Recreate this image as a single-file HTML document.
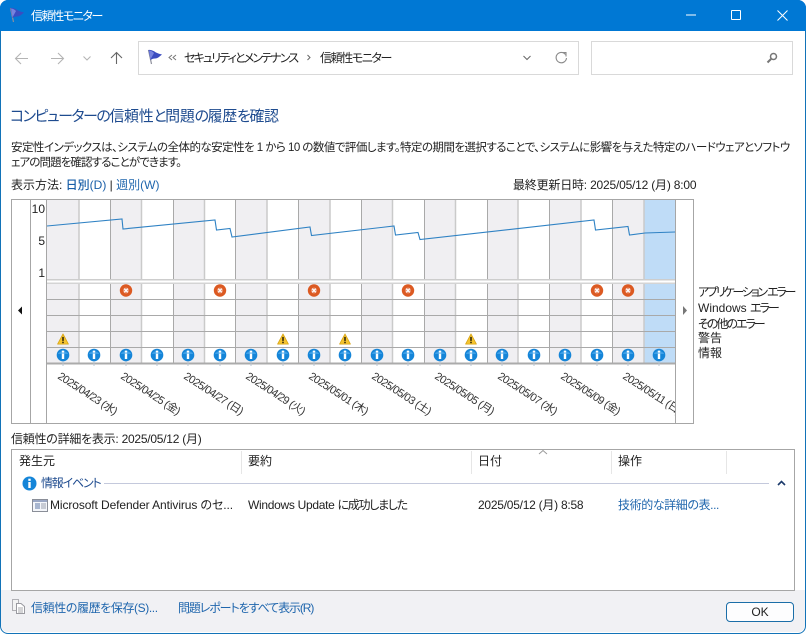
<!DOCTYPE html>
<html lang="ja"><head><meta charset="utf-8"><title>信頼性モニター</title>
<style>
html,body{margin:0;padding:0;background:#fff;width:806px;height:634px;overflow:hidden}
body{font-family:"Liberation Sans","Noto Sans CJK JP",sans-serif;font-size:12px;color:#222;font-feature-settings:"palt"}
#w{position:absolute;left:0;top:0;width:804px;height:632px;border:1px solid #1273b8;border-radius:8px;overflow:hidden;background:#fff}
#page{position:absolute;left:0;top:0;width:806px;height:634px}
.t{position:absolute;white-space:nowrap;line-height:16px;height:16px}
.l{color:#1f66ad}
svg{position:absolute;left:0;top:0}
svg text{font-family:"Liberation Sans","Noto Sans CJK JP",sans-serif;font-feature-settings:"palt"}
</style></head><body>
<div id="w"></div>
<div id="page">
<div style="position:absolute;left:0;top:0;width:806px;height:31px;background:#0078d4;border-radius:8px 8px 0 0"></div>
<div style="position:absolute;left:1px;top:590px;width:804px;height:42px;background:#f1f1f4;border-radius:0 0 7px 7px"></div>
<div class="t" style="left:31px;top:8px;color:#fff;font-size:12px;letter-spacing:-1.400px">信頼性モニター</div>

<svg width="806" height="634" viewBox="0 0 806 634">
<defs>
<symbol id="flag" viewBox="0 0 16 16" overflow="visible">
<path d="M1.5 1L4.5 15" stroke="#8d8f9c" stroke-width="1.2" fill="none"/>
<path d="M1.5 1C5 .5 8 3 9 3.5C11 4.5 13 5 15 5.5C13 7 11 9.5 8 9.5C6 9.5 5 10 3.6 11Z" fill="#3b4cc0"/>
<path d="M2 1.5C4 1.5 6 3 7 4L4 9.5L3.4 10Z" fill="#7683df"/>
</symbol>
<g id="inf"><path d="M0 6V11" stroke="#b9c4d0" stroke-width="1"/><circle r="6.300" fill="#1585d8"/><path d="M-5.300 -1A6.300 6.300 0 0 1 5.300 -1Z" fill="#3ea0e8"/><rect x="-1.2" y="-1.5" width="2.4" height="5.500" fill="#fff"/><rect x="-1.2" y="-4.4" width="2.4" height="2" fill="#fff"/></g>
<g id="err"><circle r="6.200" fill="#dc5a22"/><circle r="3" fill="#e98f6c"/><path d="M-1.800 -1.800L1.800 1.800M1.800 -1.800L-1.800 1.800" stroke="#fff" stroke-width="1.300"/></g>
<g id="wrn"><path d="M0 -5.6L5.4 4.6H-5.4Z" fill="#f4c430" stroke="#d9a514" stroke-width=".8" stroke-linejoin="round"/><rect x="-.9" y="-2.6" width="1.8" height="4" fill="#4a3a10"/><rect x="-.9" y="2.2" width="1.8" height="1.5" fill="#4a3a10"/></g>
<clipPath id="c"><rect x="47" y="364" width="628" height="59"/></clipPath>
</defs>

<!-- title flag and window buttons -->
<use href="#flag" x="9" y="7" width="16" height="16"/>
<path d="M686 15H696" stroke="#fff" stroke-width="1"/>
<rect x="731.5" y="10.5" width="9" height="9" fill="none" stroke="#fff" stroke-width="1" rx=".5"/>
<path d="M777.5 10.5L787.5 20.5M787.5 10.5L777.5 20.5" stroke="#fff" stroke-width="1"/>

<!-- nav -->
<g fill="none" stroke="#b4b4b4" stroke-width="1.1">
<path d="M28 58.500H16M21 53L15.500 58.500L21 64"/>
<path d="M51 58.500H63M58 53L63.500 58.500L58 64"/>
<path d="M83.500 56.500L87 60L90.500 56.500"/>
</g>
<path d="M116.500 64V52.500M111 58L116.500 52.500L122 58" fill="none" stroke="#666" stroke-width="1.1"/>
<rect x="138.500" y="41.500" width="440" height="33" fill="#fff" stroke="#d9d9d9"/>
<rect x="591.500" y="41.500" width="201" height="33" fill="#fff" stroke="#d9d9d9"/>
<use href="#flag" x="147" y="49" width="16" height="16"/>
<path d="M172 55L169 57.500L172 60M176 55L173 57.500L176 60" fill="none" stroke="#777" stroke-width="1"/>
<path d="M307.500 55L310 57.500L307.500 60" fill="none" stroke="#666" stroke-width="1"/>
<path d="M523.500 56L527 59.500L530.500 56" fill="none" stroke="#666" stroke-width="1"/>
<path d="M565.500 54.500A5.200 5.200 0 1 0 566.500 58" fill="none" stroke="#8a8a8a" stroke-width="1.1"/><path d="M562 52.500H566V56.500" fill="none" stroke="#8a8a8a" stroke-width="1.1"/>
<circle cx="773.500" cy="56.500" r="3" fill="none" stroke="#777" stroke-width="1.500"/><path d="M771 59L767.500 62.500" stroke="#777" stroke-width="2"/>

<!-- chart -->
<rect x="11.500" y="199.500" width="682" height="224" fill="#fff" stroke="#a6a6a6"/>
<g fill="#f0eff2">
<rect x="47" y="200" width="32" height="163"/><rect x="110" y="200" width="31" height="163"/><rect x="173" y="200" width="31" height="163"/><rect x="235" y="200" width="32" height="163"/><rect x="298" y="200" width="32" height="163"/><rect x="361" y="200" width="31" height="163"/><rect x="424" y="200" width="31" height="163"/><rect x="487" y="200" width="31" height="163"/><rect x="550" y="200" width="31" height="163"/><rect x="612" y="200" width="32" height="163"/>
</g>
<rect x="644" y="200" width="31" height="163" fill="#bfdcf7"/>
<g stroke="#cacaca" stroke-width="1.500">
<path d="M79 200V363M141.500 200V363M204.500 200V363M267 200V363M330 200V363M392.500 200V363M455.500 200V363M518 200V363M581 200V363M644 200V363"/>
</g>
<g stroke="#a9a9a9" stroke-width="1">
<path d="M110.500 200V363M173.500 200V363M235.500 200V363M298.500 200V363M361.500 200V363M424.500 200V363M487.500 200V363M549.500 200V363M612.500 200V363"/>
<path d="M47 299.500H675M47 315.500H675M47 331.500H675M47 347.500H675"/>
</g>
<rect x="47" y="280" width="628" height="3.500" fill="#fff"/>
<rect x="47" y="279" width="628" height="1.500" fill="#cdcdcd"/>
<rect x="47" y="282.500" width="628" height="1.500" fill="#d4d4d4"/>
<rect x="47" y="362.500" width="628" height="2" fill="#ababab"/>
<path d="M30.500 200V423M46.500 200V423M675.500 200V423" stroke="#a6a6a6" fill="none"/>
<polyline points="47,226 122,219 123,229 215,220 216.500,230 230,228.500 232,237 310,227 311.500,235.500 394,226 395.500,235 418,232.500 420,239.500 594,220 595.500,230 628,226.500 629.500,235 645,233 675,232" fill="none" stroke="#2f82c4" stroke-width="1.100"/>
<g fill="#222" font-size="12" text-anchor="end"><text x="45" y="213">10</text><text x="45" y="245">5</text><text x="45" y="277">1</text></g>
<path d="M18 310.500L22 306.500V314.500Z" fill="#111"/>
<path d="M683 306L687 310.500L683 315Z" fill="#777"/>
<use href="#err" x="126" y="290.500"/><use href="#err" x="220" y="290.500"/><use href="#err" x="314" y="290.500"/><use href="#err" x="408" y="290.500"/><use href="#err" x="597" y="290.500"/><use href="#err" x="628" y="290.500"/>
<use href="#wrn" x="63" y="339.500"/><use href="#wrn" x="283" y="339.500"/><use href="#wrn" x="345" y="339.500"/><use href="#wrn" x="471" y="339.500"/>
<use href="#inf" x="63" y="355"/><use href="#inf" x="94" y="355"/><use href="#inf" x="126" y="355"/><use href="#inf" x="157" y="355"/><use href="#inf" x="188" y="355"/><use href="#inf" x="220" y="355"/><use href="#inf" x="251" y="355"/><use href="#inf" x="283" y="355"/><use href="#inf" x="314" y="355"/><use href="#inf" x="345" y="355"/><use href="#inf" x="377" y="355"/><use href="#inf" x="408" y="355"/><use href="#inf" x="440" y="355"/><use href="#inf" x="471" y="355"/><use href="#inf" x="502" y="355"/><use href="#inf" x="534" y="355"/><use href="#inf" x="565" y="355"/><use href="#inf" x="597" y="355"/><use href="#inf" x="628" y="355"/><use href="#inf" x="659" y="355"/>
<g clip-path="url(#c)" font-size="11" fill="#333" letter-spacing="-.6">
<text transform="translate(57,378) rotate(33)">2025/04/23 (水)</text>
<text transform="translate(120,378) rotate(33)">2025/04/25 (金)</text>
<text transform="translate(183,378) rotate(33)">2025/04/27 (日)</text>
<text transform="translate(245,378) rotate(33)">2025/04/29 (火)</text>
<text transform="translate(308,378) rotate(33)">2025/05/01 (木)</text>
<text transform="translate(371,378) rotate(33)">2025/05/03 (土)</text>
<text transform="translate(434,378) rotate(33)">2025/05/05 (月)</text>
<text transform="translate(497,378) rotate(33)">2025/05/07 (水)</text>
<text transform="translate(560,378) rotate(33)">2025/05/09 (金)</text>
<text transform="translate(622,378) rotate(33)">2025/05/11 (日)</text>
</g>

<!-- list -->
<rect x="11.500" y="449.500" width="783" height="141" fill="#fff" stroke="#a6a6a6"/>
<path d="M241.500 451V474M471.500 451V474M611.500 451V474M726.500 451V474" stroke="#e6e6e6"/>
<path d="M539 454L543 450.500L547 454" fill="none" stroke="#9a9a9a" stroke-width="1"/>
<g transform="translate(29.500,483.500)"><circle r="7" fill="#1585d8"/><rect x="-1.200" y="-1.500" width="2.400" height="6" fill="#fff"/><rect x="-1.200" y="-4.800" width="2.400" height="2.200" fill="#fff"/></g>
<path d="M104 483.500H769" stroke="#c4c9dc"/>
<path d="M778 485L781.500 481.500L785 485" fill="none" stroke="#1b3a6b" stroke-width="1.600"/>
<rect x="32.500" y="499.500" width="15" height="12" fill="#f4f6fa" stroke="#8a8e98"/><rect x="33" y="500" width="14" height="2" fill="#9aa7c4"/><rect x="35" y="503" width="5" height="6" fill="#a8b6d0"/><path d="M41 504H46M41 506H46M41 508H46" stroke="#9aa0ad"/>

<!-- footer -->
<path d="M12.500 599.500H18.500V610.500H12.500Z" fill="#f3f3f3" stroke="#b0b0b5"/>
<path d="M16.500 603.500H21L24.500 606.500V613.500H16.500Z" fill="#fff" stroke="#9a9aa0"/><path d="M18 608H23M18 610H23M18 612H23" stroke="#a8a8ae"/>
<rect x="726.500" y="602.500" width="67" height="19" rx="3.500" fill="#fdfdfe" stroke="#1b6ea8"/>
</svg>

<div class="t" style="left:184px;top:50px;letter-spacing:-1.850px">セキュリティとメンテナンス</div>
<div class="t" style="left:320px;top:50px;letter-spacing:-1.400px">信頼性モニター</div>
<div class="t" style="left:10px;top:108px;font-size:15px;line-height:18px;height:18px;color:#1e4b8f;letter-spacing:-.3px"><span style="letter-spacing:-1.500px">コンピューターの</span>信頼性<span style="letter-spacing:-1.500px">と</span>問題<span style="letter-spacing:-1.500px">の</span>履歴<span style="letter-spacing:-1.500px">を</span>確認</div>
<div class="t" style="left:11px;top:140px;font-size:11.500px;letter-spacing:-.54px">安定性インデックスは、システムの全体的な安定性を 1 から 10 の数値で評価します。特定の期間を選択することで、システムに影響を与えた特定のハードウェアとソフトウ</div>
<div class="t" style="left:11px;top:155px;font-size:11.500px;letter-spacing:-.9px">ェアの問題を確認することができます。</div>
<div class="t" style="left:11px;top:177px">表示方法: <span style="color:#1a5fa8;font-weight:500">日別(D)</span> | <span class="l">週別(W)</span></div>
<div class="t" style="left:513px;top:177px;letter-spacing:-.2px">最終更新日時: 2025/05/12 (月) 8:00</div>
<div class="t" style="left:698px;top:284px;letter-spacing:-2.200px">アプリケーション エラー</div>
<div class="t" style="left:698px;top:300px">Windows <span style="letter-spacing:-2px">エラー</span></div>
<div class="t" style="left:698px;top:316px;letter-spacing:-2px">その他のエラー</div>
<div class="t" style="left:698px;top:330px">警告</div>
<div class="t" style="left:698px;top:345px">情報</div>
<div class="t" style="left:11px;top:431px;letter-spacing:-.25px">信頼性の詳細を表示: 2025/05/12 (月)</div>
<div class="t" style="left:19px;top:453px">発生元</div>
<div class="t" style="left:248px;top:453px">要約</div>
<div class="t" style="left:478px;top:453px">日付</div>
<div class="t" style="left:618px;top:453px">操作</div>
<div class="t" style="left:41px;top:475px;color:#1e4b8f;letter-spacing:-1.200px">情報イベント</div>
<div class="t" style="left:50px;top:497px;letter-spacing:-.1px">Microsoft Defender Antivirus のセ...</div>
<div class="t" style="left:248px;top:497px"><span style="letter-spacing:-.3px">Windows Update </span><span style="letter-spacing:-1.300px">に成功しました</span></div>
<div class="t" style="left:478px;top:497px;letter-spacing:-.25px">2025/05/12 (月) 8:58</div>
<div class="t l" style="left:618px;top:497px;letter-spacing:-.4px">技術的な詳細の表...</div>
<div class="t l" style="left:31px;top:600px;letter-spacing:-.4px">信頼性の履歴を保存(S)...</div>
<div class="t l" style="left:178px;top:600px;letter-spacing:-1.100px">問題レポートをすべて表示(R)</div>
<div class="t" style="left:726px;top:604px;width:68px;text-align:center">OK</div>
</div>
</body></html>
